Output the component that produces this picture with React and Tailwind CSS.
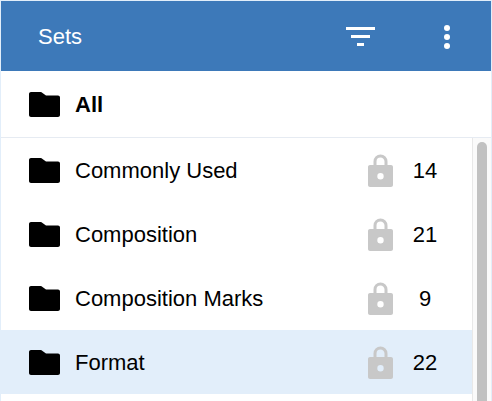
import React from "react";

const sets = [
  { name: "Commonly Used", count: 14 },
  { name: "Composition", count: 21 },
  { name: "Composition Marks", count: 9 },
  { name: "Format", count: 22, selected: true },
];

function FolderIcon() {
  return (
    <svg width="31" height="25" viewBox="0 0 31 25" className="shrink-0">
      <path
        d="M2 0h9.500c.8 0 1.400.3 2 .9L17 3.500h12c1.100 0 2 .9 2 2V23c0 1.100-.9 2-2 2H2c-1.100 0-2-.9-2-2V2C0 .9.900 0 2 0z"
        fill="#000"
      />
    </svg>
  );
}

function LockIcon() {
  return (
    <svg width="25" height="33" viewBox="0 0 25 33" className="shrink-0">
      <path
        d="M7 14V7a5.500 5.500 0 0 1 11 0v7"
        fill="none"
        stroke="#c8c8c8"
        strokeWidth="3"
        transform="translate(0 0.500)"
      />
      <path
        fillRule="evenodd"
        d="M2 11h21c1.100 0 2 .9 2 2v18c0 1.100-.9 2-2 2H2c-1.100 0-2-.9-2-2V13c0-1.100.9-2 2-2zm10.500 8a3.200 3.200 0 1 0 0 6.400 3.200 3.200 0 0 0 0-6.400z"
        fill="#c8c8c8"
      />
    </svg>
  );
}

function SetRow({ name, count, selected }) {
  return (
    <div className={`flex h-16 items-center pl-7 ${selected ? "bg-[#e2eefa]" : "bg-white"}`}>
      <FolderIcon />
      <span className="ml-[15px] flex-1 text-[22px]">{name}</span>
      <LockIcon />
      <span className="mr-[15px] w-[64px] text-center text-[22px]">{count}</span>
    </div>
  );
}

export default function App() {
  return (
    <div className="h-[401px] w-[492px] overflow-hidden border-x border-t border-[#e2eefa] bg-white font-['Liberation_Sans',Arial,sans-serif] text-black">
      {/* HEADER */}
      <div className="flex h-[70px] items-center bg-[#3d79b9] pl-[37px] text-white">
        <span className="flex-1 pt-px text-[22px]">Sets</span>
        <svg width="29" height="20" viewBox="0 0 29 20" className="mr-[68px] shrink-0">
          <rect x="0" y="1" width="29" height="3" fill="#fff" />
          <rect x="5" y="9" width="19" height="3" fill="#fff" />
          <rect x="11" y="17" width="7" height="3" fill="#fff" />
        </svg>
        <svg width="8" height="25" viewBox="0 0 8 25" className="mr-10 shrink-0">
          <circle cx="4" cy="4" r="3" fill="#fff" />
          <circle cx="4" cy="13" r="3" fill="#fff" />
          <circle cx="4" cy="22" r="3" fill="#fff" />
        </svg>
      </div>

      {/* ALL ROW */}
      <div className="flex h-[67px] items-center border-b border-[#e6ebf2] pl-7">
        <FolderIcon />
        <span className="ml-[15px] text-[22px] font-bold">All</span>
      </div>

      {/* LIST + SCROLLBAR */}
      <div className="flex">
        <div className="w-[471px] shrink-0">
          {sets.map((set) => (
            <SetRow key={set.name} {...set} />
          ))}
        </div>
        <div className="flex-1 border-l border-[#e8e8e8] bg-[#fafafa] pt-1 pl-1">
          <div className="h-[300px] w-[10px] rounded-full bg-[#c1c1c1]" />
        </div>
      </div>
    </div>
  );
}
